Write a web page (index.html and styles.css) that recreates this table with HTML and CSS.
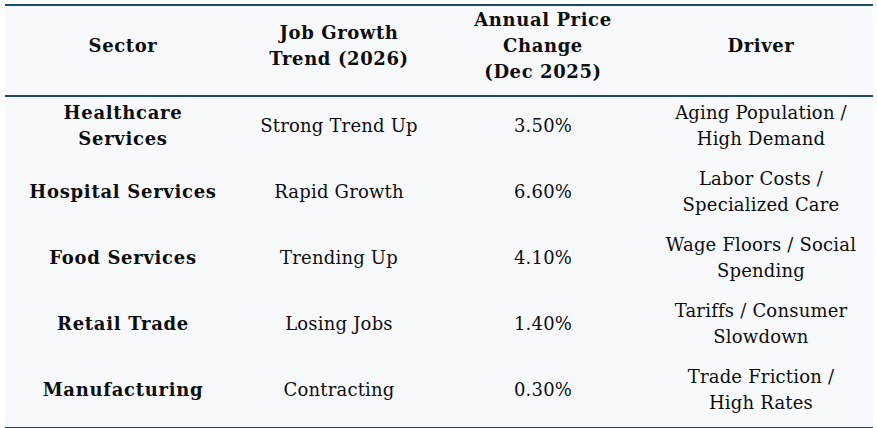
FILE: index.html
```html
<!DOCTYPE html>
<html>
<head>
<meta charset="utf-8">
<link rel="stylesheet" href="styles.css">
</head>
<body>
<table class="data">
  <colgroup>
    <col class="c1"><col class="c2"><col class="c3"><col class="c4">
  </colgroup>
  <thead>
    <tr>
      <th>Sector</th>
      <th>Job Growth<br>Trend (2026)</th>
      <th>Annual Price<br>Change<br>(Dec 2025)</th>
      <th>Driver</th>
    </tr>
  </thead>
  <tbody>
    <tr><td class="sector">Healthcare<br>Services</td><td>Strong Trend Up</td><td>3.50%</td><td>Aging Population /<br>High Demand</td></tr>
    <tr><td class="sector">Hospital Services</td><td>Rapid Growth</td><td>6.60%</td><td>Labor Costs /<br>Specialized Care</td></tr>
    <tr><td class="sector">Food Services</td><td>Trending Up</td><td>4.10%</td><td>Wage Floors / Social<br>Spending</td></tr>
    <tr><td class="sector">Retail Trade</td><td>Losing Jobs</td><td>1.40%</td><td>Tariffs / Consumer<br>Slowdown</td></tr>
    <tr><td class="sector">Manufacturing</td><td>Contracting</td><td>0.30%</td><td>Trade Friction /<br>High Rates</td></tr>
  </tbody>
</table>
</body>
</html>
```
FILE: styles.css
```css
html, body {
  margin: 0;
  padding: 0;
  background: #ffffff;
}
body {
  padding: 4px 4px 0 5px;
  font-family: "DejaVu Serif", serif;
  color: #0d0d0d;
}
.data {
  width: 868px;
  border-collapse: collapse;
  background: #f7f9fd;
  border-top: 2px solid #1b4a5e;
  border-bottom: 3px solid #1b4a5e;
  font-size: 18px;
  line-height: 26px;
  letter-spacing: 0.2px;
}
.c1 { width: 236px; }
.c2 { width: 196px; }
.c3 { width: 212px; }
.c4 { width: 224px; }
.data th {
  font-weight: bold;
  letter-spacing: 0.6px;
  text-align: center;
  vertical-align: middle;
  height: 78px;
  padding: 1px 4px 10px;
  border-bottom: 2px solid #1b4a5e;
}
.data td {
  text-align: center;
  vertical-align: middle;
  height: 52px;
  padding: 3px 4px 11px;
}
.data td.sector {
  font-weight: bold;
  letter-spacing: 0.7px;
}
```
